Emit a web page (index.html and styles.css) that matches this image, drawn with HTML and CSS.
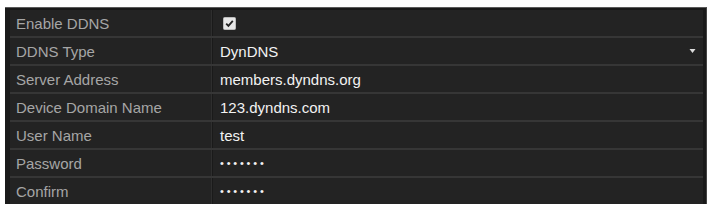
FILE: index.html
```html
<!DOCTYPE html>
<html lang="en">
<head>
    <meta charset="UTF-8">
    <title>DDNS</title>
    <link rel="stylesheet" href="styles.css">
</head>
<body>
    <div class="panel">
        <div class="row">
            <div class="label">Enable DDNS</div>
            <div class="value">
                <svg class="check" width="13" height="13" viewBox="0 0 13 13">
                    <rect x="0.5" y="0.5" width="12" height="12" rx="1" fill="#e6e6e6" stroke="#bbb"/>
                    <path d="M3.2 6.6 L5.4 8.9 L9.8 3.9" fill="none" stroke="#222" stroke-width="1.8"/>
                </svg>
            </div>
        </div>
        <div class="row">
            <div class="label">DDNS Type</div>
            <div class="value select">
                <span>DynDNS</span>
                <svg class="arrow" width="7" height="6" viewBox="0 0 7 6">
                    <path d="M0.5 1 L3.5 5 L6.5 1 Z" fill="#ddd"/>
                </svg>
            </div>
        </div>
        <div class="row">
            <div class="label">Server Address</div>
            <div class="value">members.dyndns.org</div>
        </div>
        <div class="row">
            <div class="label">Device Domain Name</div>
            <div class="value">123.dyndns.com</div>
        </div>
        <div class="row">
            <div class="label">User Name</div>
            <div class="value">test</div>
        </div>
        <div class="row">
            <div class="label">Password</div>
            <div class="value dots">&bull;&bull;&bull;&bull;&bull;&bull;&bull;</div>
        </div>
        <div class="row">
            <div class="label">Confirm</div>
            <div class="value dots">&bull;&bull;&bull;&bull;&bull;&bull;&bull;</div>
        </div>
    </div>
</body>
</html>
```

FILE: styles.css
```css
body {
    margin: 0;
    background: #ffffff;
    font-family: "Liberation Sans", Arial, sans-serif;
    font-size: 15px;
    overflow: hidden;
}

.panel {
    margin: 7px 5px 0 5px;
    border-top: 1px solid #5a5a5a;
    border-right: 1px solid #444;
    background: #1a1a1a;
    padding: 2px 3px 0 5px;
}

.row {
    display: grid;
    grid-template-columns: 203px 1fr;
    height: 26px;
    border-bottom: 2px solid #363636;
    background: #232323;
}

.label {
    display: flex;
    align-items: center;
    padding-left: 6px;
    color: #a6a6a6;
    border-right: 1px solid #1a1a1a;
    box-shadow: inset -1px 0 0 #2e2e2e;
}

.value {
    display: flex;
    align-items: center;
    padding-left: 7px;
    color: #f2f2f2;
}

.select {
    justify-content: space-between;
    padding-right: 7px;
}

.check {
    display: block;
    margin-left: 3px;
}

.dots {
    font-size: 11px;
    letter-spacing: 2.8px;
}
```
